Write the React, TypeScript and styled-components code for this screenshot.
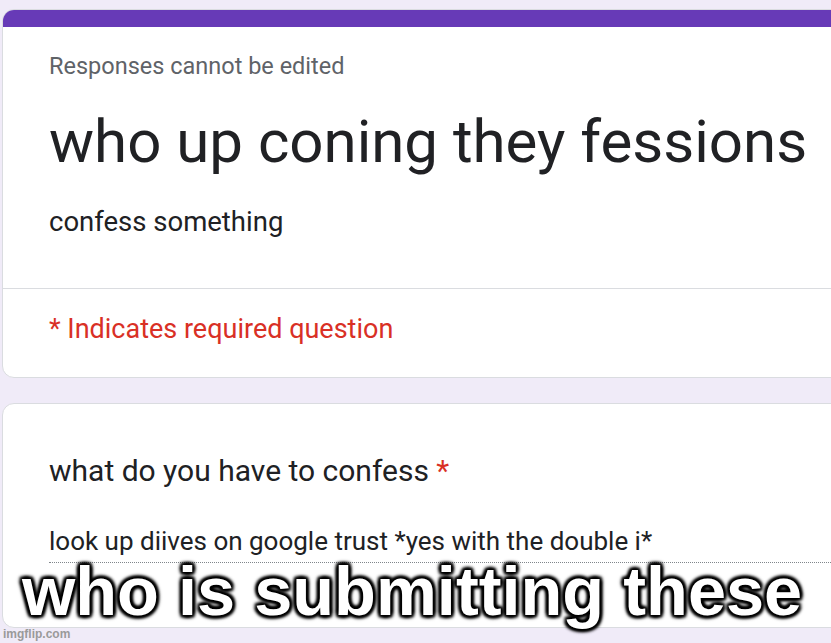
import React from "react";
import styled, { createGlobalStyle } from "styled-components";

const GlobalStyle = createGlobalStyle`
  html, body {
    margin: 0;
    padding: 0;
    background: #f0ebf8;
  }
  body {
    font-family: Roboto, "Noto Sans", Arial, sans-serif;
    color: #202124;
  }
`;

const Page = styled.div`
  position: relative;
  height: 643px;
  overflow: hidden;
  padding: 9px 0 0 2px;
  box-sizing: border-box;
`;

const Card = styled.div`
  width: 880px;
  background: #ffffff;
  border: 1px solid #dadce0;
  border-radius: 12px;
  box-sizing: border-box;
  overflow: hidden;
  & + & {
    margin-top: 25px;
  }
`;

const TopBar = styled.div`
  height: 18px;
  margin: -1px -1px 0 -1px;
  background: #673ab7;
`;

const Header = styled.div`
  padding: 25px 46px 50px;
`;

const Notice = styled.div`
  font-size: 23.5px;
  line-height: 28px;
  color: #5f6368;
`;

const Title = styled.h1`
  margin: 28px 0 0;
  font-size: 60px;
  font-weight: 400;
  line-height: 68px;
  color: #202124;
`;

const Description = styled.div`
  margin-top: 30px;
  font-size: 27.5px;
  line-height: 32px;
`;

const Divider = styled.div`
  border-top: 1px solid #dadce0;
`;

const Required = styled.div`
  padding: 24px 46px 32px;
  font-size: 27px;
  line-height: 32px;
  color: #d93025;
`;

const Question = styled.div`
  padding: 49px 46px 0;
  height: 223px;
  box-sizing: border-box;
`;

const QuestionTitle = styled.div`
  font-size: 30px;
  line-height: 36px;
  color: #202124;
`;

const Star = styled.span`
  color: #d93025;
`;

const Answer = styled.div`
  margin-top: 36px;
  width: 800px;
  font-size: 26px;
  line-height: 32px;
  padding-bottom: 5px;
  border-bottom: 1px dotted #80868b;
`;

const Caption = styled.div`
  position: absolute;
  left: 22px;
  top: 552px;
  font-family: "Liberation Sans", Arial, sans-serif;
  font-weight: 700;
  font-size: 68.5px;
  line-height: 80px;
  color: #ffffff;
  white-space: nowrap;
  text-shadow: 2px 2px 3px #000, -2px -2px 3px #000, 2px -2px 3px #000,
    -2px 2px 3px #000, 0 2px 4px #000, 0 -2px 4px #000, 2px 0 4px #000,
    -2px 0 4px #000;
`;

const Watermark = styled.div`
  position: absolute;
  left: 3px;
  bottom: 2px;
  font-family: "Liberation Sans", Arial, sans-serif;
  font-size: 12px;
  font-weight: 700;
  color: #9a9a9a;
`;

export default function App() {
  return (
    <>
      <GlobalStyle />
      <Page>
        <Card>
          <TopBar />
          <Header>
            <Notice>Responses cannot be edited</Notice>
            <Title>who up coning they fessions</Title>
            <Description>confess something</Description>
          </Header>
          <Divider />
          <Required>* Indicates required question</Required>
        </Card>
        <Card>
          <Question>
            <QuestionTitle>
              what do you have to confess <Star>*</Star>
            </QuestionTitle>
            <Answer>look up diives on google trust *yes with the double i*</Answer>
          </Question>
        </Card>
        <Caption>who is submitting these</Caption>
        <Watermark>imgflip.com</Watermark>
      </Page>
    </>
  );
}
